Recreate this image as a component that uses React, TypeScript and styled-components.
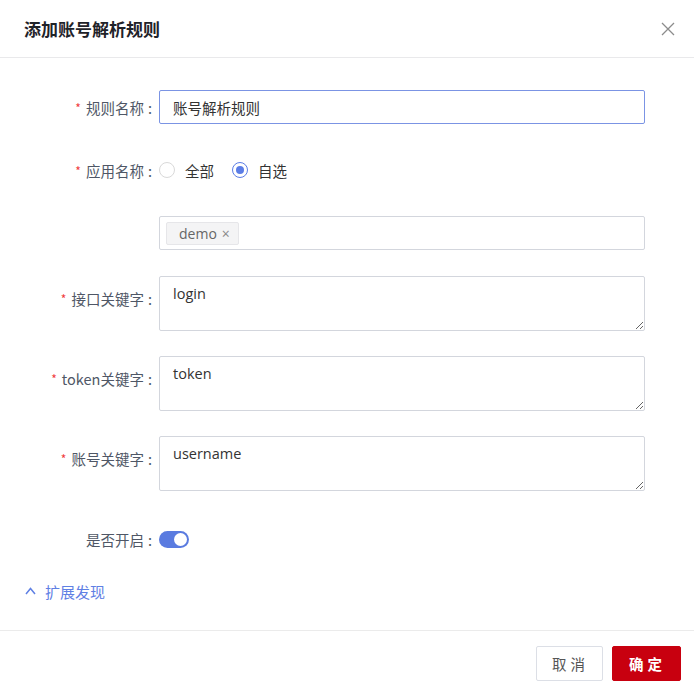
import React, {FC, useState} from 'react';
import styled, {createGlobalStyle} from 'styled-components';

const GlobalStyle = createGlobalStyle`
    html, body {
        margin: 0;
        padding: 0;
        background: #fff;
    }
    body {
        font-family: 'Noto Sans CJK SC', 'Noto Sans', sans-serif;
        color: #333;
    }
`;

const Dialog = styled.div`
    width: 694px;
    height: 693px;
    display: flex;
    flex-direction: column;
    background: #fff;
`;

const Header = styled.div`
    height: 58px;
    box-sizing: border-box;
    display: flex;
    align-items: center;
    justify-content: space-between;
    padding: 0 19px 0 24px;
    border-bottom: 1px solid #e9e9eb;
`;

const Title = styled.h2`
    margin: 0;
    font-size: 17px;
    font-weight: 600;
    color: #1f2329;
`;

const CloseButton = styled.button`
    border: none;
    background: none;
    padding: 0;
    width: 14px;
    height: 14px;
    cursor: pointer;
    display: flex;
`;

const Body = styled.div`
    flex: 1;
    padding: 32px 49px 0 0;
`;

const FormItem = styled.div<{$gap: number}>`
    display: grid;
    grid-template-columns: 152px 1fr;
    column-gap: 7px;
    margin-bottom: ${p => p.$gap}px;
`;

const Label = styled.label<{$tall?: boolean}>`
    display: flex;
    align-items: center;
    justify-content: flex-end;
    height: ${p => (p.$tall ? 44 : 34)}px;
    font-size: 14.5px;
    color: #4f5766;
    white-space: nowrap;
`;

const Colon = styled.span`
    margin-left: 4px;
`;

const Required = styled.span`
    color: #f03c3c;
    font-size: 12px;
    margin-right: 5px;
`;

const TextInput = styled.input`
    height: 34px;
    box-sizing: border-box;
    width: 100%;
    border: 1.5px solid #7b94e4;
    border-radius: 2px;
    padding: 0 13px;
    font-family: inherit;
    font-size: 14.5px;
    color: #333;
    outline: none;
`;

const TextArea = styled.textarea`
    height: 55px;
    box-sizing: border-box;
    width: 100%;
    border: 1px solid #d3d6dd;
    border-radius: 2px;
    padding: 6px 13px;
    font-family: 'Open Sans', 'Noto Sans CJK SC', sans-serif;
    font-size: 14.5px;
    line-height: 22px;
    color: #333;
    outline: none;
    display: block;
`;

const RadioGroup = styled.div`
    display: flex;
    align-items: center;
    height: 34px;
    gap: 18px;
`;

const RadioOption = styled.label`
    display: flex;
    align-items: center;
    gap: 10px;
    font-size: 14.5px;
    color: #333;
    cursor: pointer;
`;

const RadioCircle = styled.span<{$checked: boolean}>`
    width: 16px;
    height: 16px;
    box-sizing: border-box;
    border-radius: 50%;
    border: 1px solid ${p => (p.$checked ? '#5b7de6' : '#d9d9d9')};
    display: flex;
    align-items: center;
    justify-content: center;
    &::after {
        content: '';
        width: 8px;
        height: 8px;
        border-radius: 50%;
        background: #5b7de6;
        display: ${p => (p.$checked ? 'block' : 'none')};
    }
`;

const TagBox = styled.div`
    height: 34px;
    box-sizing: border-box;
    border: 1px solid #d3d6dd;
    border-radius: 2px;
    display: flex;
    align-items: center;
    padding: 0 6px;
`;

const Tag = styled.span`
    height: 23px;
    box-sizing: border-box;
    display: flex;
    align-items: center;
    gap: 5px;
    padding: 0 8px 0 12px;
    background: #f4f4f5;
    border: 1px solid #e6e6e9;
    border-radius: 2px;
    font-family: 'Open Sans', sans-serif;
    font-size: 14px;
    color: #666;
`;

const TagClose = styled.span`
    font-size: 14px;
    color: #888;
`;

const Switch = styled.button<{$on: boolean}>`
    width: 30px;
    height: 17px;
    border: none;
    border-radius: 9px;
    padding: 0 2px;
    background: ${p => (p.$on ? '#5a7be0' : '#dcdfe6')};
    display: flex;
    align-items: center;
    justify-content: ${p => (p.$on ? 'flex-end' : 'flex-start')};
    cursor: pointer;
    align-self: center;
    &::after {
        content: '';
        width: 13px;
        height: 13px;
        border-radius: 50%;
        background: #fff;
    }
`;

const Expand = styled.button`
    margin: 0 0 0 25px;
    border: none;
    background: none;
    padding: 0;
    display: flex;
    align-items: center;
    gap: 9px;
    height: 20px;
    font-family: inherit;
    font-size: 15px;
    color: #5f80e4;
    cursor: pointer;
`;

const Footer = styled.div`
    height: 63px;
    box-sizing: border-box;
    border-top: 1px solid #ebebeb;
    display: flex;
    justify-content: flex-end;
    align-items: flex-start;
    gap: 9px;
    padding: 15px 13px 0 0;
`;

const FooterButton = styled.button<{$primary?: boolean}>`
    height: 35px;
    padding: ${p => (p.$primary ? '0 14px 0 16px' : '0 13px 0 15px')};
    border-radius: 2px;
    border: 1px solid ${p => (p.$primary ? '#c8000f' : '#dcdfe6')};
    background: ${p => (p.$primary ? '#c8000f' : '#fff')};
    color: ${p => (p.$primary ? '#fff' : '#555')};
    font-family: inherit;
    font-size: 14.5px;
    font-weight: ${p => (p.$primary ? 600 : 400)};
    letter-spacing: 4px;
    cursor: pointer;
`;

const CloseIcon: FC = () => (
    <svg width="14" height="14" viewBox="0 0 14 14" fill="none" stroke="#8c8c8c" strokeWidth="1.3">
        <path d="M1 1L13 13M13 1L1 13" />
    </svg>
);

const ChevronUp: FC = () => (
    <svg width="11" height="8" viewBox="0 0 11 8" fill="none" stroke="#5f80e4" strokeWidth="1.5">
        <path d="M1 7L5.5 1.5L10 7" />
    </svg>
);

const keywordFields = [
    {label: '接口关键字', value: 'login'},
    {label: 'token关键字', value: 'token'},
    {label: '账号关键字', value: 'username'},
];

const App: FC = () => {
    const [scope, setScope] = useState<'all' | 'custom'>('custom');
    const [enabled, setEnabled] = useState(true);

    return (
        <Dialog>
            <GlobalStyle />
            <Header>
                <Title>添加账号解析规则</Title>
                <CloseButton aria-label="关闭">
                    <CloseIcon />
                </CloseButton>
            </Header>
            <Body>
                <FormItem $gap={29}>
                    <Label>
                        <Required>*</Required>规则名称<Colon>:</Colon>
                    </Label>
                    <TextInput defaultValue="账号解析规则" />
                </FormItem>
                <FormItem $gap={29}>
                    <Label>
                        <Required>*</Required>应用名称<Colon>:</Colon>
                    </Label>
                    <RadioGroup>
                        <RadioOption onClick={() => setScope('all')}>
                            <RadioCircle $checked={scope === 'all'} />
                            全部
                        </RadioOption>
                        <RadioOption onClick={() => setScope('custom')}>
                            <RadioCircle $checked={scope === 'custom'} />
                            自选
                        </RadioOption>
                    </RadioGroup>
                </FormItem>
                <FormItem $gap={26}>
                    <span />
                    <TagBox>
                        <Tag>
                            demo<TagClose>×</TagClose>
                        </Tag>
                    </TagBox>
                </FormItem>
                {keywordFields.map((field, i) => (
                    <FormItem key={field.label} $gap={i === keywordFields.length - 1 ? 31 : 25}>
                        <Label $tall>
                            <Required>*</Required>
                            {field.label}
                            <Colon>:</Colon>
                        </Label>
                        <TextArea defaultValue={field.value} />
                    </FormItem>
                ))}
                <FormItem $gap={25}>
                    <Label>
                        是否开启<Colon>:</Colon>
                    </Label>
                    <Switch $on={enabled} onClick={() => setEnabled(!enabled)} />
                </FormItem>
                <Expand>
                    <ChevronUp />
                    扩展发现
                </Expand>
            </Body>
            <Footer>
                <FooterButton>取消</FooterButton>
                <FooterButton $primary>确定</FooterButton>
            </Footer>
        </Dialog>
    );
};

export default App;
